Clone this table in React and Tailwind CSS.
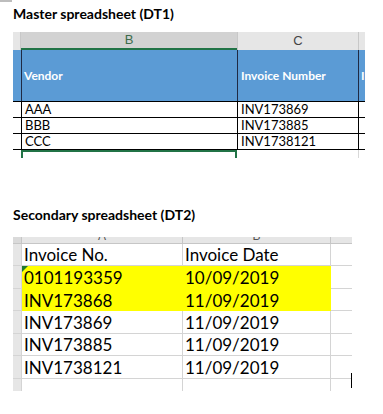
import React from "react";

const calibri = { fontFamily: "Lato, 'Noto Sans', sans-serif" };

function MasterTable() {
  const rows = [
    ["AAA", "INV173869"],
    ["BBB", "INV173885"],
    ["CCC", "INV1738121"],
  ];
  return (
    <div className="ml-[13px] mt-[8px] w-[352px] text-black" style={calibri}>
      {/* column letters */}
      <div className="flex h-[18px]">
        <div className="w-[8px] bg-[#e6e6e6] border-r border-[#c8c8c8]" />
        <div className="w-[216px] bg-[#d2d2d2] border-b-2 border-[#217346] flex items-center justify-center text-[13px] text-[#3b6b4b] font-['Liberation_Sans',sans-serif]">
          B
        </div>
        <div className="w-[121px] bg-[#e6e6e6] border-l border-[#c8c8c8] flex items-center justify-center text-[13px] text-[#444] font-['Liberation_Sans',sans-serif]">
          C
        </div>
        <div className="w-[7px] bg-[#e6e6e6] border-l border-[#c8c8c8]" />
      </div>
      {/* blue header row */}
      <div className="flex h-[52px] bg-[#5b9bd5] border-b border-black">
        <div className="w-[8px]" />
        <div className="w-[216px] border-l border-[#1f2a44] flex items-center pl-[2px] text-[12px] font-bold text-white">
          Vendor
        </div>
        <div className="w-[121px] border-l border-[#1f2a44] flex items-center pl-[3px] text-[12px] font-bold text-white whitespace-nowrap">
          Invoice Number
        </div>
        <div className="w-[7px] border-l border-[#1f2a44] flex items-center pl-[2px] text-[12px] font-bold text-white overflow-hidden">
          I
        </div>
      </div>
      {rows.map((r) => (
        <div key={r[0]} className="flex h-[16px] border-b border-black">
          <div className="w-[8px]" />
          <div className="w-[216px] border-l border-black flex items-center pl-[3px] text-[13px] leading-none">
            {r[0]}
          </div>
          <div className="w-[121px] border-l border-black flex items-center pl-[3px] text-[13px] leading-none">
            {r[1]}
          </div>
          <div className="w-[7px] border-l border-black" />
        </div>
      ))}
      {/* selected empty cell */}
      <div className="flex h-[8px]">
        <div className="w-[8px]" />
        <div className="w-[216px] border-l-2 border-r-2 border-t-2 border-[#217346]" />
        <div className="w-[121px]" />
        <div className="w-[7px] border-l border-[#d8d8d8]" />
      </div>
    </div>
  );
}

function SecondaryTable() {
  const rows = [
    ["0101193359", "10/09/2019", true],
    ["INV173868", "11/09/2019", true],
    ["INV173869", "11/09/2019", false],
    ["INV173885", "11/09/2019", false],
    ["INV1738121", "11/09/2019", false],
  ];
  return (
    <div className="relative ml-[13px] mt-[12px] w-[339px] text-black" style={calibri}>
      {/* clipped column letters */}
      <div className="flex h-[7px] bg-[#e6e6e6] border-b border-[#c6c6c6] overflow-hidden text-[#555] font-['Liberation_Sans',sans-serif] text-[12px]">
        <div className="w-[9px] border-r border-[#c6c6c6] bg-[#dadada]" />
        <div className="w-[161px] border-r border-[#c6c6c6] flex justify-center items-start">
          <span className="leading-[12px] -mt-[7px]">A</span>
        </div>
        <div className="w-[148px] border-r border-[#c6c6c6] flex justify-center items-start">
          <span className="leading-[12px] -mt-[7px]">B</span>
        </div>
        <div className="w-[21px]" />
      </div>
      {/* header row */}
      <div className="flex h-[22px] text-[17px]">
        <div className="w-[9px] bg-[#e6e6e6] border-r border-b border-[#d4d4d4]" />
        <div className="w-[161px] border-r border-b border-[#d4d4d4] flex items-center pl-[2px] pt-[1px]">
          Invoice No.
        </div>
        <div className="w-[148px] border-r border-b border-[#d4d4d4] flex items-center pl-[2px] pt-[1px]">
          Invoice Date
        </div>
        <div className="w-[21px] border-b border-[#d4d4d4]" />
      </div>
      {rows.map((r, i) => (
        <div key={r[0]} className="flex h-[22.5px] text-[17px]">
          <div className="w-[9px] bg-[#e6e6e6] border-r border-b border-[#d4d4d4]" />
          <div
            className={
              r[2]
                ? "w-[161px] bg-[#ffff00] flex items-center pl-[2px] pt-[1px] relative"
                : "w-[161px] border-r border-b border-[#d4d4d4] flex items-center pl-[2px] pt-[1px]"
            }
          >
            {i === 0 && (
              <span className="absolute left-0 top-0 w-0 h-0 border-t-[6px] border-r-[6px] border-t-[#1e7a2e] border-r-transparent" />
            )}
            {r[0]}
          </div>
          <div
            className={
              r[2]
                ? "w-[148px] bg-[#ffff00] flex items-center pl-[2px] pt-[1px]"
                : "w-[148px] border-r border-b border-[#d4d4d4] flex items-center pl-[2px] pt-[1px]"
            }
          >
            {r[1]}
          </div>
          <div className="w-[21px] border-b border-[#d4d4d4]" />
        </div>
      ))}
      {/* partial row */}
      <div className="flex h-[12px]">
        <div className="w-[9px] bg-[#e6e6e6] border-r border-[#d4d4d4]" />
        <div className="w-[161px] border-r border-[#d4d4d4]" />
        <div className="w-[148px] border-r border-[#d4d4d4]" />
        <div className="w-[21px]" />
      </div>
      {/* text cursor */}
      <div className="absolute left-[338px] top-[136px] w-[1px] h-[15px] bg-black" />
    </div>
  );
}

export default function App() {
  return (
    <div className="w-[383px] h-[414px] bg-white overflow-hidden relative">
      <div className="absolute left-0 top-0 w-[12px] h-[2px] bg-[#bdbdbd]" />
      <div
        className="ml-[13px] mt-[4px] h-[20px] leading-[20px] text-[14px] font-bold text-black"
        style={calibri}
      >
        Master spreadsheet (DT1)
      </div>
      <MasterTable />
      <div
        className="ml-[13px] mt-[47px] h-[20px] leading-[20px] text-[14px] font-bold text-black"
        style={calibri}
      >
        Secondary spreadsheet (DT2)
      </div>
      <SecondaryTable />
    </div>
  );
}
